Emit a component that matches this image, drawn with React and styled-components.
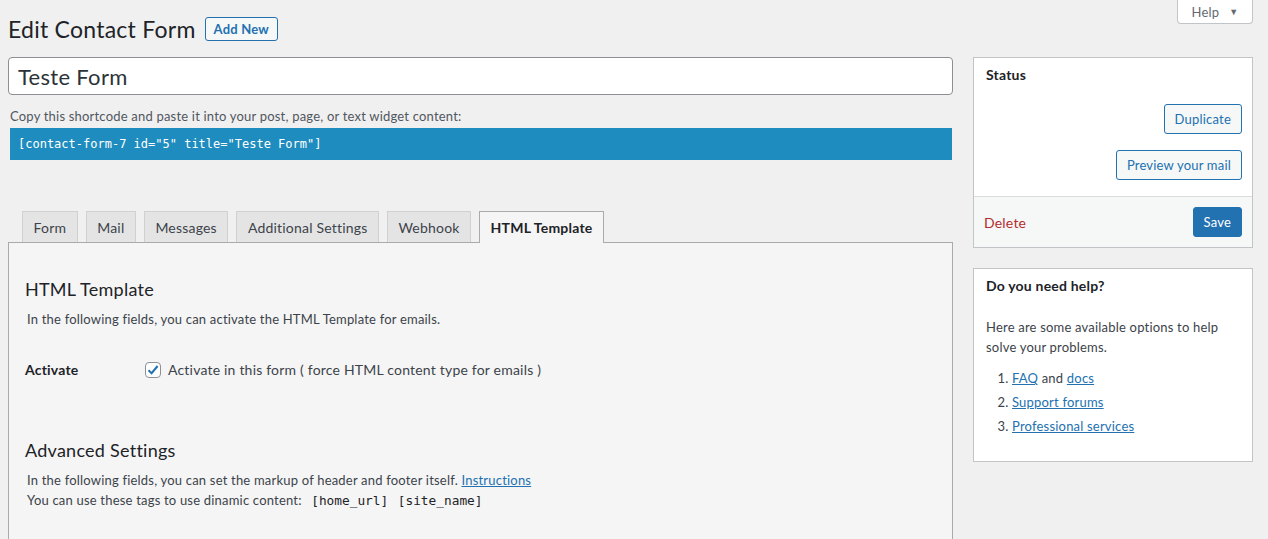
import React from 'react'
import styled, { createGlobalStyle, css } from 'styled-components'

const GlobalStyle = createGlobalStyle`
  body {
    margin: 0;
    background: #f0f0f1;
    font-family: Lato, "Noto Sans", sans-serif;
    color: #3c434a;
    font-size: 13px;
    letter-spacing: 0.2px;
  }
`

const tabs = ['Form', 'Mail', 'Messages', 'Additional Settings', 'Webhook', 'HTML Template']

export default function App () {
  return (
    <Page>
      <GlobalStyle />
      <Header>
        <TitleRow>
          <Title>Edit Contact Form</Title>
          <OutlineButton small>Add New</OutlineButton>
        </TitleRow>
        <HelpTab>
          Help <Caret>▼</Caret>
        </HelpTab>
      </Header>
      <Columns>
        <MainColumn>
          <TitleInput defaultValue='Teste Form' />
          <ShortcodeLabel>Copy this shortcode and paste it into your post, page, or text widget content:</ShortcodeLabel>
          <Shortcode>[contact-form-7 id="5" title="Teste Form"]</Shortcode>
          <TabNav>
            {tabs.map(t => (
              <Tab key={t} active={t === 'HTML Template'}>{t}</Tab>
            ))}
          </TabNav>
          <Panel>
            <SectionTitle>HTML Template</SectionTitle>
            <Description>In the following fields, you can activate the HTML Template for emails.</Description>
            <FieldRow>
              <FieldLabel>Activate</FieldLabel>
              <CheckLabel>
                <Checkbox>
                  <svg width='14' height='14' viewBox='0 0 14 14'>
                    <path d='M2.5 7.2 L5.6 10.2 L11.6 3' fill='none' stroke='#2271b1' strokeWidth='2' />
                  </svg>
                </Checkbox>
                Activate in this form ( force HTML content type for emails )
              </CheckLabel>
            </FieldRow>
            <SectionTitle advanced>Advanced Settings</SectionTitle>
            <Description>
              In the following fields, you can set the markup of header and footer itself. <Link href='#'>Instructions</Link>
            </Description>
            <Description>
              You can use these tags to use dinamic content: <Code>[home_url]</Code> <Code>[site_name]</Code>
            </Description>
          </Panel>
        </MainColumn>
        <Sidebar>
          <Box>
            <BoxTitle>Status</BoxTitle>
            <StatusActions>
              <OutlineButton>Duplicate</OutlineButton>
              <OutlineButton>Preview your mail</OutlineButton>
            </StatusActions>
            <BoxFooter>
              <DeleteLink href='#'>Delete</DeleteLink>
              <PrimaryButton>Save</PrimaryButton>
            </BoxFooter>
          </Box>
          <Box>
            <BoxTitle>Do you need help?</BoxTitle>
            <HelpBody>
              <p>Here are some available options to help solve your problems.</p>
              <HelpList>
                <li><Link href='#'>FAQ</Link> and <Link href='#'>docs</Link></li>
                <li><Link href='#'>Support forums</Link></li>
                <li><Link href='#'>Professional services</Link></li>
              </HelpList>
            </HelpBody>
          </Box>
        </Sidebar>
      </Columns>
    </Page>
  )
}

const buttonBase = css`
  font-family: inherit;
  font-size: 13px;
  letter-spacing: 0.2px;
  border-radius: 3px;
  padding: 0 10px;
  height: 30px;
  cursor: pointer;
`

const Page = styled.div`
  padding: 0 15px 0 8px;
`

const Header = styled.div`
  display: flex;
  justify-content: space-between;
  align-items: flex-start;
  height: 57px;
`

const TitleRow = styled.div`
  display: flex;
  align-items: center;
  gap: 9px;
  padding-top: 14px;
`

const Title = styled.h1`
  margin: 0;
  font-size: 23px;
  font-weight: 400;
  line-height: 30px;
  letter-spacing: 0.25px;
  color: #1d2327;
`

const OutlineButton = styled.button`
  ${buttonBase}
  background: #f6f7f7;
  border: 1px solid #2271b1;
  color: #2271b1;
  ${p => p.small && css`
    height: 24px;
    padding: 0 8px;
    font-weight: 700;
  `}
`

const PrimaryButton = styled.button`
  ${buttonBase}
  background: #2271b1;
  border: 1px solid #2271b1;
  color: #fff;
`

const HelpTab = styled.div`
  width: 76px;
  height: 24px;
  box-sizing: border-box;
  background: #fff;
  border: 1px solid #c3c4c7;
  border-top: none;
  border-radius: 0 0 4px 4px;
  display: flex;
  align-items: center;
  justify-content: center;
  gap: 10px;
  color: #646970;
  font-size: 13px;
`

const Caret = styled.span`
  font-size: 9px;
`

const Columns = styled.div`
  display: flex;
  gap: 20px;
  align-items: flex-start;
`

const MainColumn = styled.div`
  flex: 1;
  min-width: 0;
`

const TitleInput = styled.input`
  display: block;
  box-sizing: border-box;
  width: 100%;
  height: 38px;
  padding: 0 9px;
  border: 1px solid #8c8f94;
  border-radius: 4px;
  background: #fff;
  font-family: inherit;
  font-size: 22px;
  letter-spacing: 0.3px;
  color: #2c3338;
  outline: none;
`

const ShortcodeLabel = styled.p`
  margin: 13px 0 4px 2px;
  line-height: 16px;
  color: #50575e;
`

const Shortcode = styled.div`
  margin: 0 1px 0 2px;
  height: 32px;
  box-sizing: border-box;
  padding: 0 8px;
  display: flex;
  align-items: center;
  background: #1e8cbe;
  color: #fff;
  font-family: "DejaVu Sans Mono", monospace;
  font-size: 12px;
  letter-spacing: 0;
`

const TabNav = styled.div`
  display: flex;
  gap: 8px;
  margin-top: 51px;
  padding-left: 14px;
  position: relative;
  z-index: 1;
  margin-bottom: -1px;
`

const Tab = styled.div`
  height: 31px;
  box-sizing: border-box;
  padding: 0 10.5px;
  display: flex;
  align-items: center;
  font-size: 14px;
  color: #3c434a;
  background: #e4e4e4;
  border: 1px solid #d0d0d0;
  border-bottom: none;
  ${p => p.active && css`
    height: 32px;
    background: #f5f5f5;
    border-color: #aaa;
    font-weight: 700;
    color: #1d2327;
  `}
`

const Panel = styled.div`
  background: #f5f5f5;
  border: 1px solid #aaa;
  padding: 34px 16px 40px;
  min-height: 300px;
`

const SectionTitle = styled.h2`
  margin: 0 0 8px;
  font-size: 18px;
  font-weight: 400;
  line-height: 24px;
  letter-spacing: 0.25px;
  color: #1d2327;
  ${p => p.advanced && css`
    margin-top: 60px;
  `}
`

const Description = styled.p`
  margin: 0 0 0 2px;
  line-height: 20px;
  color: #3c434a;
`

const FieldRow = styled.div`
  display: flex;
  align-items: center;
  margin-top: 32px;
`

const FieldLabel = styled.div`
  width: 120px;
  font-size: 14px;
  font-weight: 700;
  color: #1d2327;
`

const CheckLabel = styled.label`
  display: flex;
  align-items: center;
  gap: 7px;
  font-size: 14px;
  color: #3c434a;
`

const Checkbox = styled.span`
  width: 16px;
  height: 16px;
  box-sizing: border-box;
  border: 1px solid #8c8f94;
  border-radius: 4px;
  background: #fff;
  display: flex;
  align-items: center;
  justify-content: center;
`

const Link = styled.a`
  color: #2271b1;
  text-decoration: underline;
`

const Code = styled.code`
  font-family: "DejaVu Sans Mono", monospace;
  font-size: 12.8px;
  letter-spacing: 0;
  color: #1d2327;
  margin-left: 6px;
`

const Sidebar = styled.div`
  width: 280px;
  display: flex;
  flex-direction: column;
  gap: 20px;
`

const Box = styled.div`
  background: #fff;
  border: 1px solid #c3c4c7;
`

const BoxTitle = styled.h3`
  margin: 0;
  padding: 7px 12px 9px;
  font-size: 14px;
  font-weight: 700;
  line-height: 20px;
  color: #1d2327;
`

const StatusActions = styled.div`
  display: flex;
  flex-direction: column;
  align-items: flex-end;
  gap: 16px;
  padding: 10px 10px 16px;
`

const BoxFooter = styled.div`
  display: flex;
  justify-content: space-between;
  align-items: center;
  padding: 10px;
  background: #f6f7f7;
  border-top: 1px solid #dcdcde;
`

const DeleteLink = styled.a`
  color: #b32d2e;
  text-decoration: none;
  font-size: 14px;
`

const HelpBody = styled.div`
  padding: 12px 12px 21px;
  font-size: 13px;
  color: #3c434a;

  p {
    margin: 0 0 11px;
    line-height: 20px;
  }
`

const HelpList = styled.ol`
  margin: 0;
  padding-left: 26px;

  li {
    line-height: 20px;
    margin-bottom: 4px;
  }
`
